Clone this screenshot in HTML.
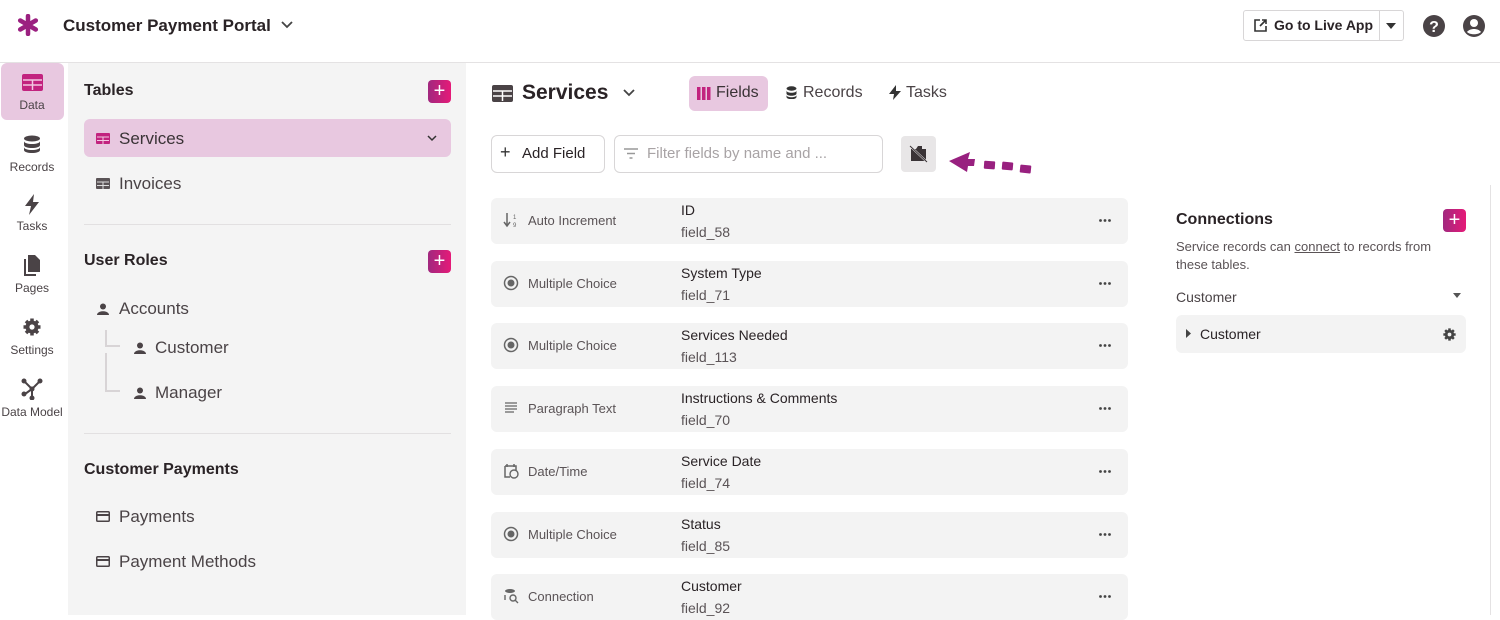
<!DOCTYPE html>
<html><head><style>
*{box-sizing:border-box;margin:0;padding:0}
body{width:1500px;height:615px;overflow:hidden;background:#fff;font-family:"Liberation Sans",sans-serif;color:#2a2326;position:relative}
.abs{position:absolute}
.hdr{left:0;top:0;width:1500px;height:63px;border-bottom:1px solid #e4e2e3;background:#fff}
.plus{width:23px;height:23px;border-radius:4px;background:linear-gradient(90deg,#a1287f,#e51a78);color:#fff;font-size:20px;line-height:22px;text-align:center}
.nav{width:64px;left:0;text-align:center;font-size:12px;color:#4a4346}
.side{left:68px;top:63px;width:398px;height:552px;background:#f4f4f4}
.row{left:491px;width:637px;height:46px;background:#f3f3f3;border-radius:6px}
.row .t{position:absolute;left:37px;top:15px;font-size:13px;color:#5a5356}
.row .n{position:absolute;left:190px;top:4px;font-size:14px;color:#2a2326}
.row .f{position:absolute;left:190px;top:26px;font-size:14px;color:#5a5356}
.row .d{position:absolute;right:17px;top:21px;width:12px;height:3px}
.row .i{position:absolute;left:12px;top:14px;width:16px;height:16px}
.sitem{font-size:17px;color:#4a4346}
</style></head><body>
<div class="abs hdr"></div>
<svg class="abs" style="left:17px;top:14px" width="22" height="22" viewBox="0 0 22 22"><g stroke="#9b2080" stroke-width="4.5" stroke-linecap="round"><path d="M11 2v18M3.2 6.5l15.6 9M3.2 15.5l15.6-9"/></g></svg>
<div class="abs" style="left:63px;top:16px;font-size:17px;font-weight:bold;color:#2a2326">Customer Payment Portal</div>
<svg class="abs" style="left:280px;top:19px" width="14" height="12"><path d="M2 3l5 5 5-5" stroke="#444" stroke-width="1.8" fill="none"/></svg>
<div class="abs" style="left:1243px;top:10px;width:161px;height:31px;border:1px solid #d8d6d7;border-radius:3px"></div>
<div class="abs" style="left:1379px;top:10px;width:1px;height:31px;background:#d8d6d7"></div>
<svg class="abs" style="left:1253px;top:18px" width="15" height="15"><path d="M7 2H2v11h11V8M9 2h4v4M13 2L7 8" stroke="#333" stroke-width="1.6" fill="none"/></svg>
<div class="abs" style="left:1274px;top:17px;font-size:14px;font-weight:bold">Go to Live App</div>
<svg class="abs" style="left:1386px;top:23px" width="10" height="6"><path d="M0 0h10L5 6z" fill="#333"/></svg>
<svg class="abs" style="left:1422px;top:14px" width="24" height="24"><circle cx="12" cy="12" r="11" fill="#4a4346"/><text x="12" y="18" font-size="16" font-weight="bold" fill="#fff" text-anchor="middle" font-family="Liberation Sans">?</text></svg>
<svg class="abs" style="left:1462px;top:14px" width="24" height="24"><circle cx="12" cy="12" r="11" fill="#4a4346"/><circle cx="12" cy="9" r="4" fill="#fff"/><path d="M5 18c3-4 11-4 14 0c-3 3-11 3-14 0z" fill="#fff"/></svg>

<div class="abs" style="left:1px;top:63px;width:63px;height:57px;background:#e8c8e0;border-radius:6px"></div>
<svg class="abs" style="left:22px;top:74px" width="21" height="17"><rect x="0" y="0" width="21" height="17" rx="2" fill="#c2237f"/><path d="M1 6h19M1 11h19M10.5 6v10" stroke="#f2c8e2" stroke-width="1.5"/></svg>
<div class="abs nav" style="top:98px">Data</div>
<svg class="abs" style="left:23px;top:135px" width="18" height="19"><ellipse cx="9" cy="3.5" rx="8" ry="3" fill="#4a4346"/><path d="M1 6c0 4 16 4 16 0v4c0 4-16 4-16 0zM1 12c0 4 16 4 16 0v3c0 4-16 4-16 0z" fill="#4a4346"/></svg>
<div class="abs nav" style="top:160px">Records</div>
<svg class="abs" style="left:24px;top:194px" width="16" height="21"><path d="M10 0L1 12h6l-2 9 10-13H9z" fill="#4a4346"/></svg>
<div class="abs nav" style="top:219px">Tasks</div>
<svg class="abs" style="left:23px;top:255px" width="18" height="22"><path d="M5 0h7l5 5v12H5z" fill="#4a4346"/><path d="M2 4v16h11" stroke="#4a4346" stroke-width="2" fill="none"/></svg>
<div class="abs nav" style="top:281px">Pages</div>
<svg class="abs" style="left:23px;top:318px" width="18" height="18" viewBox="0 0 18 18"><g fill="#4a4346"><circle cx="9" cy="9" r="6.5"/><g stroke="#4a4346" stroke-width="3.5"><path d="M9 0.5v17M0.5 9h17M3 3l12 12M15 3L3 15"/></g></g><circle cx="9" cy="9" r="2.6" fill="#fff"/></svg>
<div class="abs nav" style="top:343px">Settings</div>
<svg class="abs" style="left:21px;top:378px" width="22" height="22"><path d="M3 3l8 8M19 3l-8 8M11 11v8M11 11L4 16" stroke="#4a4346" stroke-width="2"/><circle cx="3" cy="3" r="2.5" fill="#4a4346"/><circle cx="19" cy="3" r="2.5" fill="#4a4346"/><circle cx="11" cy="20" r="2.5" fill="#4a4346"/><circle cx="3" cy="16" r="2.5" fill="#4a4346"/><circle cx="11" cy="11" r="2.5" fill="#4a4346"/></svg>
<div class="abs nav" style="top:405px">Data Model</div>

<div class="abs side"></div>
<div class="abs" style="left:84px;top:82px;font-size:16px;font-weight:bold">Tables</div>
<div class="abs plus" style="left:428px;top:80px">+</div>
<div class="abs" style="left:84px;top:119px;width:367px;height:38px;background:#e8c8e0;border-radius:6px"></div>
<svg class="abs" style="left:96px;top:133px" width="14" height="11"><rect width="14" height="11" rx="1" fill="#c2237f"/><path d="M1 4h12M1 7.5h12M7 4v7" stroke="#f2c8e2" stroke-width="1"/></svg>
<div class="abs sitem" style="left:119px;top:129px;color:#3a3336">Services</div>
<svg class="abs" style="left:427px;top:135px" width="10" height="7"><path d="M1 1l4 4 4-4" stroke="#333" stroke-width="1.5" fill="none"/></svg>
<svg class="abs" style="left:96px;top:178px" width="14" height="11"><rect width="14" height="11" rx="1" fill="#5a5356"/><path d="M1 4h12M1 7.5h12M7 4v7" stroke="#ddd" stroke-width="1"/></svg>
<div class="abs sitem" style="left:119px;top:174px">Invoices</div>
<div class="abs" style="left:84px;top:224px;width:367px;height:1px;background:#e2e0e1"></div>
<div class="abs" style="left:84px;top:252px;font-size:16px;font-weight:bold">User Roles</div>
<div class="abs plus" style="left:428px;top:250px">+</div>
<svg class="abs" style="left:97px;top:303px" width="12" height="12"><circle cx="6" cy="3.5" r="3" fill="#4a4346"/><path d="M0 12c0-5 12-5 12 0z" fill="#4a4346"/></svg>
<div class="abs sitem" style="left:119px;top:299px">Accounts</div>
<div class="abs" style="left:105px;top:330px;width:15px;height:17px;border-left:2px solid #d8d4d6;border-bottom:2px solid #d8d4d6"></div>
<div class="abs" style="left:105px;top:353px;width:15px;height:39px;border-left:2px solid #d8d4d6;border-bottom:2px solid #d8d4d6"></div>
<svg class="abs" style="left:134px;top:342px" width="12" height="12"><circle cx="6" cy="3.5" r="3" fill="#4a4346"/><path d="M0 12c0-5 12-5 12 0z" fill="#4a4346"/></svg>
<div class="abs sitem" style="left:155px;top:338px">Customer</div>
<svg class="abs" style="left:134px;top:387px" width="12" height="12"><circle cx="6" cy="3.5" r="3" fill="#4a4346"/><path d="M0 12c0-5 12-5 12 0z" fill="#4a4346"/></svg>
<div class="abs sitem" style="left:155px;top:383px">Manager</div>
<div class="abs" style="left:84px;top:433px;width:367px;height:1px;background:#e2e0e1"></div>
<div class="abs" style="left:84px;top:461px;font-size:16px;font-weight:bold">Customer Payments</div>
<svg class="abs" style="left:96px;top:511px" width="14" height="11"><rect x="0.75" y="0.75" width="12.5" height="9.5" rx="1" fill="none" stroke="#4a4346" stroke-width="1.5"/><path d="M1 4h12" stroke="#4a4346" stroke-width="2"/></svg>
<div class="abs sitem" style="left:119px;top:507px">Payments</div>
<svg class="abs" style="left:96px;top:556px" width="14" height="11"><rect x="0.75" y="0.75" width="12.5" height="9.5" rx="1" fill="none" stroke="#4a4346" stroke-width="1.5"/><path d="M1 4h12" stroke="#4a4346" stroke-width="2"/></svg>
<div class="abs sitem" style="left:119px;top:552px">Payment Methods</div>

<svg class="abs" style="left:492px;top:85px" width="21" height="17"><rect width="21" height="17" rx="2" fill="#4a4346"/><path d="M1 6h19M1 11h19M10.5 6v10" stroke="#fff" stroke-width="1.5"/></svg>
<div class="abs" style="left:522px;top:81px;font-size:21px;font-weight:bold">Services</div>
<svg class="abs" style="left:622px;top:88px" width="14" height="10"><path d="M2 2l5 5 5-5" stroke="#444" stroke-width="1.8" fill="none"/></svg>
<div class="abs" style="left:689px;top:76px;width:79px;height:35px;background:#e8c8e0;border-radius:6px"></div>
<svg class="abs" style="left:697px;top:87px" width="14" height="13"><rect x="0" width="3.5" height="13" fill="#c2237f"/><rect x="5" width="3.5" height="13" fill="#c2237f"/><rect x="10" width="3.5" height="13" fill="#c2237f"/></svg>
<div class="abs" style="left:716px;top:84px;font-size:16px;color:#3a3336">Fields</div>
<svg class="abs" style="left:786px;top:86px" width="11" height="13"><ellipse cx="5.5" cy="2.5" rx="5" ry="2.2" fill="#333"/><path d="M.5 4.5c0 3 10 3 10 0v3c0 3-10 3-10 0zM.5 9c0 3 10 3 10 0v2c0 3-10 3-10 0z" fill="#333"/></svg>
<div class="abs" style="left:803px;top:84px;font-size:16px;color:#4a4346">Records</div>
<svg class="abs" style="left:889px;top:85px" width="12" height="15"><path d="M7 0L0 9h5l-1 6 8-9H7z" fill="#333"/></svg>
<div class="abs" style="left:906px;top:84px;font-size:16px;color:#4a4346">Tasks</div>

<div class="abs" style="left:491px;top:135px;width:114px;height:38px;border:1px solid #d8d6d7;border-radius:6px"></div>
<div class="abs" style="left:500px;top:142px;font-size:18px;color:#333">+</div>
<div class="abs" style="left:522px;top:145px;font-size:15px;color:#2a2326">Add Field</div>
<div class="abs" style="left:614px;top:135px;width:269px;height:38px;border:1px solid #d8d6d7;border-radius:6px"></div>
<svg class="abs" style="left:624px;top:148px" width="14" height="11"><path d="M0 1h14M3 5.5h8M5.5 10h3" stroke="#999" stroke-width="1.4"/></svg>
<div class="abs" style="left:647px;top:145px;font-size:15px;color:#a8a3a5">Filter fields by name and ...</div>
<div class="abs" style="left:901px;top:136px;width:35px;height:36px;background:#e8e6e7;border-radius:4px"></div>
<svg class="abs" style="left:909px;top:145px" width="19" height="18"><path d="M2 4h5l2-3 4 0 0 3h4v12H2z" fill="#3a3336"/><path d="M1 1l17 16" stroke="#e8e6e7" stroke-width="2"/><path d="M1 1l17 16" stroke="#3a3336" stroke-width="1"/></svg>
<svg class="abs" style="left:946px;top:150px" width="90" height="28"><path d="M3 11L24 2l-2 7h7l-1 7h-6l-1 6z" fill="#98207f"/><rect x="38" y="11" width="11" height="8" rx="1" fill="#98207f" transform="rotate(4 43 15)"/><rect x="56" y="12" width="11" height="8" rx="1" fill="#98207f" transform="rotate(5 61 16)"/><rect x="74" y="15" width="11" height="8" rx="1" fill="#98207f" transform="rotate(6 79 19)"/></svg>

<div class="abs row" style="top:198px"><svg class="i" viewBox="0 0 16 16"><path d="M4 1v12M1 10l3 4 3-4" stroke="#666" stroke-width="1.5" fill="none"/><text x="10" y="7" font-size="6" fill="#666">1</text><text x="10" y="15" font-size="6" fill="#666">9</text></svg><span class="t">Auto Increment</span><span class="n">ID</span><span class="f">field_58</span><svg class="d" viewBox="0 0 12 3"><circle cx="1.5" cy="1.5" r="1.4" fill="#444"/><circle cx="6" cy="1.5" r="1.4" fill="#444"/><circle cx="10.5" cy="1.5" r="1.4" fill="#444"/></svg></div>
<div class="abs row" style="top:261px"><svg class="i" viewBox="0 0 16 16"><circle cx="8" cy="8" r="6.5" stroke="#666" stroke-width="1.5" fill="none"/><circle cx="8" cy="8" r="3.5" fill="#666"/></svg><span class="t">Multiple Choice</span><span class="n">System Type</span><span class="f">field_71</span><svg class="d" viewBox="0 0 12 3"><circle cx="1.5" cy="1.5" r="1.4" fill="#444"/><circle cx="6" cy="1.5" r="1.4" fill="#444"/><circle cx="10.5" cy="1.5" r="1.4" fill="#444"/></svg></div>
<div class="abs row" style="top:323px"><svg class="i" viewBox="0 0 16 16"><circle cx="8" cy="8" r="6.5" stroke="#666" stroke-width="1.5" fill="none"/><circle cx="8" cy="8" r="3.5" fill="#666"/></svg><span class="t">Multiple Choice</span><span class="n">Services Needed</span><span class="f">field_113</span><svg class="d" viewBox="0 0 12 3"><circle cx="1.5" cy="1.5" r="1.4" fill="#444"/><circle cx="6" cy="1.5" r="1.4" fill="#444"/><circle cx="10.5" cy="1.5" r="1.4" fill="#444"/></svg></div>
<div class="abs row" style="top:386px"><svg class="i" viewBox="0 0 16 16"><path d="M2 3h12M2 6h12M2 9h12M2 12h9" stroke="#666" stroke-width="1.3"/></svg><span class="t">Paragraph Text</span><span class="n">Instructions &amp; Comments</span><span class="f">field_70</span><svg class="d" viewBox="0 0 12 3"><circle cx="1.5" cy="1.5" r="1.4" fill="#444"/><circle cx="6" cy="1.5" r="1.4" fill="#444"/><circle cx="10.5" cy="1.5" r="1.4" fill="#444"/></svg></div>
<div class="abs row" style="top:449px"><svg class="i" viewBox="0 0 16 16"><path d="M2 3h11v5M2 3v11h5M4 1v3M11 1v3" stroke="#666" stroke-width="1.5" fill="none"/><circle cx="11" cy="11" r="4" stroke="#666" stroke-width="1.4" fill="none"/></svg><span class="t">Date/Time</span><span class="n">Service Date</span><span class="f">field_74</span><svg class="d" viewBox="0 0 12 3"><circle cx="1.5" cy="1.5" r="1.4" fill="#444"/><circle cx="6" cy="1.5" r="1.4" fill="#444"/><circle cx="10.5" cy="1.5" r="1.4" fill="#444"/></svg></div>
<div class="abs row" style="top:512px"><svg class="i" viewBox="0 0 16 16"><circle cx="8" cy="8" r="6.5" stroke="#666" stroke-width="1.5" fill="none"/><circle cx="8" cy="8" r="3.5" fill="#666"/></svg><span class="t">Multiple Choice</span><span class="n">Status</span><span class="f">field_85</span><svg class="d" viewBox="0 0 12 3"><circle cx="1.5" cy="1.5" r="1.4" fill="#444"/><circle cx="6" cy="1.5" r="1.4" fill="#444"/><circle cx="10.5" cy="1.5" r="1.4" fill="#444"/></svg></div>
<div class="abs row" style="top:574px"><svg class="i" viewBox="0 0 16 16"><ellipse cx="7" cy="3" rx="5" ry="2" fill="#666"/><circle cx="10" cy="10" r="3" stroke="#666" stroke-width="1.4" fill="none"/><path d="M12 12l3 3M2 7v5" stroke="#666" stroke-width="1.4"/></svg><span class="t">Connection</span><span class="n">Customer</span><span class="f">field_92</span><svg class="d" viewBox="0 0 12 3"><circle cx="1.5" cy="1.5" r="1.4" fill="#444"/><circle cx="6" cy="1.5" r="1.4" fill="#444"/><circle cx="10.5" cy="1.5" r="1.4" fill="#444"/></svg></div>

<div class="abs" style="left:1490px;top:185px;width:1px;height:430px;background:#e4e2e3"></div>
<div class="abs" style="left:1176px;top:211px;font-size:16px;font-weight:bold">Connections</div>
<div class="abs plus" style="left:1443px;top:209px">+</div>
<div class="abs" style="left:1176px;top:238px;font-size:13px;color:#5a5356;line-height:18px;width:290px">Service records can <u>connect</u> to records from these tables.</div>
<div class="abs" style="left:1176px;top:289px;font-size:14px;color:#4a4346">Customer</div>
<svg class="abs" style="left:1453px;top:293px" width="8" height="5"><path d="M0 0h8L4 5z" fill="#555"/></svg>
<div class="abs" style="left:1176px;top:315px;width:290px;height:38px;background:#f3f3f3;border-radius:6px"></div>
<svg class="abs" style="left:1186px;top:329px" width="5" height="9"><path d="M0 0l5 4.5L0 9z" fill="#444"/></svg>
<div class="abs" style="left:1200px;top:326px;font-size:14px;color:#2a2326">Customer</div>
<svg class="abs" style="left:1443px;top:328px" width="13" height="13" viewBox="0 0 18 18"><circle cx="9" cy="9" r="6.5" fill="#444"/><g stroke="#444" stroke-width="3.5"><path d="M9 0.5v17M0.5 9h17M3 3l12 12M15 3L3 15"/></g><circle cx="9" cy="9" r="2.6" fill="#f3f3f3"/></svg>
</body></html>
